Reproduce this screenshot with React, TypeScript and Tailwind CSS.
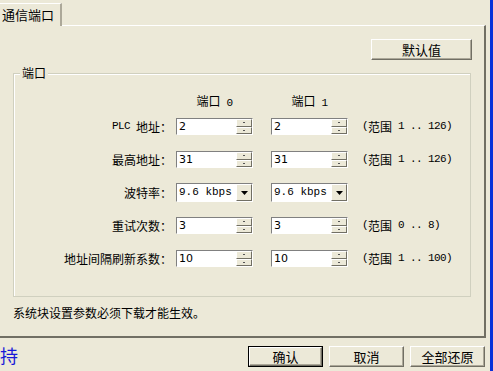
import React from 'react';

const cjk = { fontFamily: '"Noto Sans CJK SC", "Noto Sans", sans-serif' };

const rows = [
  { label: 'PLC 地址：', v0: '2', v1: '2', range: '(范围 1 .. 126)', kind: 'spin' },
  { label: '最高地址：', v0: '31', v1: '31', range: '(范围 1 .. 126)', kind: 'spin' },
  { label: '波特率：', v0: '9.6 kbps', v1: '9.6 kbps', range: '', kind: 'select' },
  { label: '重试次数：', v0: '3', v1: '3', range: '(范围 0 .. 8)', kind: 'spin' },
  { label: '地址间隔刷新系数：', v0: '10', v1: '10', range: '(范围 1 .. 100)', kind: 'spin' },
];

// mimic SimSun: CJK 12px, latin in a 6px-wide mono
const Mixed = ({ text }: { text: string }) => (
  <>
    {text.split(/([\u3000-\u9fff\uff00-\uffef]+)/).map((part, i) =>
      /[\u3000-\u9fff\uff00-\uffef]/.test(part) ? (
        <span key={i}>{part}</span>
      ) : (
        <span
          key={i}
          className="whitespace-pre text-[11px] tracking-[-0.6px]"
          style={{ fontFamily: '"Liberation Mono", monospace' }}
        >
          {part}
        </span>
      )
    )}
  </>
);

const SpinHalf = () => (
  <div className="flex flex-1 items-center justify-center border border-t-white border-l-white border-b-[#716F64] border-r-[#716F64] bg-[#ECE9D8]">
    <span className="block h-[1px] w-[2px] bg-[#555]" />
  </div>
);

const SpinBox = ({ value }: { value: string }) => (
  <div className="flex h-[17px] w-[77px] border border-t-[#808080] border-l-[#808080] border-b-white border-r-white shadow-[inset_1px_1px_0_#404040]">
    <div
      className="flex-1 bg-white pl-[2px] pt-[1px] leading-[14px] text-black"
      style={{ fontFamily: '"DejaVu Sans", sans-serif', fontSize: 11 }}
    >
      {value}
    </div>
    <div className="flex w-[16px] flex-col">
      <SpinHalf />
      <SpinHalf />
    </div>
  </div>
);

const Select = ({ value }: { value: string }) => (
  <div className="flex h-[19px] w-[77px] border border-t-[#808080] border-l-[#808080] border-b-white border-r-white shadow-[inset_1px_1px_0_#404040]">
    <div
      className="flex flex-1 items-center bg-white pl-[2px] text-black"
      style={{ fontFamily: '"Liberation Mono", monospace', fontSize: 11 }}
    >
      {value}
    </div>
    <div className="flex w-[16px] items-center justify-center border border-t-white border-l-white border-b-[#716F64] border-r-[#716F64] bg-[#ECE9D8]">
      <svg width="7" height="4" viewBox="0 0 7 4">
        <path d="M0 0h7L3.5 4z" fill="#000" />
      </svg>
    </div>
  </div>
);

const Btn = ({ children, isDefault, w }: { children: React.ReactNode; isDefault?: boolean; w: string }) => (
  <div className={`${w} h-[21px] ${isDefault ? 'border border-black' : ''}`}>
    <div className="flex h-full w-full items-center justify-center border border-t-white border-l-white border-b-[#716F64] border-r-[#716F64] bg-[#ECE9D8] text-[13px] text-black shadow-[inset_-1px_-1px_0_#ACA899]">
      {children}
    </div>
  </div>
);

export default function App() {
  return (
    <div className="flex h-[371px] w-[493px] overflow-hidden bg-[#ECE9D8] text-black" style={cjk}>
      <div className="flex w-[490px] flex-col">
        {/* tab strip */}
        <div className="flex h-[25px] items-end">
          <div className="relative z-10 mb-[-1px] flex h-[23px] w-[62px] items-center border-t border-t-white border-r-2 border-r-[#ACA899] bg-[#ECE9D8] pl-[2px] text-[13px] leading-[14px]">
            通信端口
          </div>
        </div>

        {/* tab panel */}
        <div className="flex h-[313px] w-[486px] flex-col border-t border-t-white border-r-2 border-r-[#716F64] border-b-2 border-b-[#716F64]">
          <div className="flex justify-end pr-[12px] pt-[13px]">
            <Btn w="w-[101px]">默认值</Btn>
          </div>

          <div className="relative mx-[13px] mt-[13px] h-[224px] border border-[#D0D0BF] shadow-[inset_1px_1px_0_#fff]">
            <span className="absolute left-[6px] top-[-8px] bg-[#ECE9D8] px-[2px] text-[12px] leading-[14px]">端口</span>

            <div className="grid grid-cols-[162px_95px_91px_1fr] pt-[20px] text-[12px]">
              <div className="h-[14px]" />
              <div className="w-[77px] text-center leading-[14px]"><Mixed text="端口 0" /></div>
              <div className="w-[77px] text-center leading-[14px]"><Mixed text="端口 1" /></div>
              <div />

              {rows.map((r) => (
                <React.Fragment key={r.label}>
                  <div className="flex h-[33px] items-center justify-end pr-[4px]"><Mixed text={r.label} /></div>
                  <div className="flex h-[33px] items-center">
                    {r.kind === 'spin' ? <SpinBox value={r.v0} /> : <Select value={r.v0} />}
                  </div>
                  <div className="flex h-[33px] items-center">
                    {r.kind === 'spin' ? <SpinBox value={r.v1} /> : <Select value={r.v1} />}
                  </div>
                  <div className="flex h-[33px] items-center"><Mixed text={r.range} /></div>
                </React.Fragment>
              ))}
            </div>
          </div>

          <div className="ml-[13px] mt-[9px] text-[12px] leading-[14px]">系统块设置参数必须下载才能生效。</div>
        </div>

        {/* bottom bar */}
        <div className="flex flex-1 items-center">
          <span className="text-[18px] leading-none text-[#1818D8]">持</span>
          <div className="ml-auto mr-[5px] mt-[4px] flex gap-[6px]">
            <Btn w="w-[75px]" isDefault>确认</Btn>
            <Btn w="w-[75px]">取消</Btn>
            <Btn w="w-[75px]">全部还原</Btn>
          </div>
        </div>
      </div>
      <div className="w-[3px] bg-[#0831D9]" />
    </div>
  );
}
